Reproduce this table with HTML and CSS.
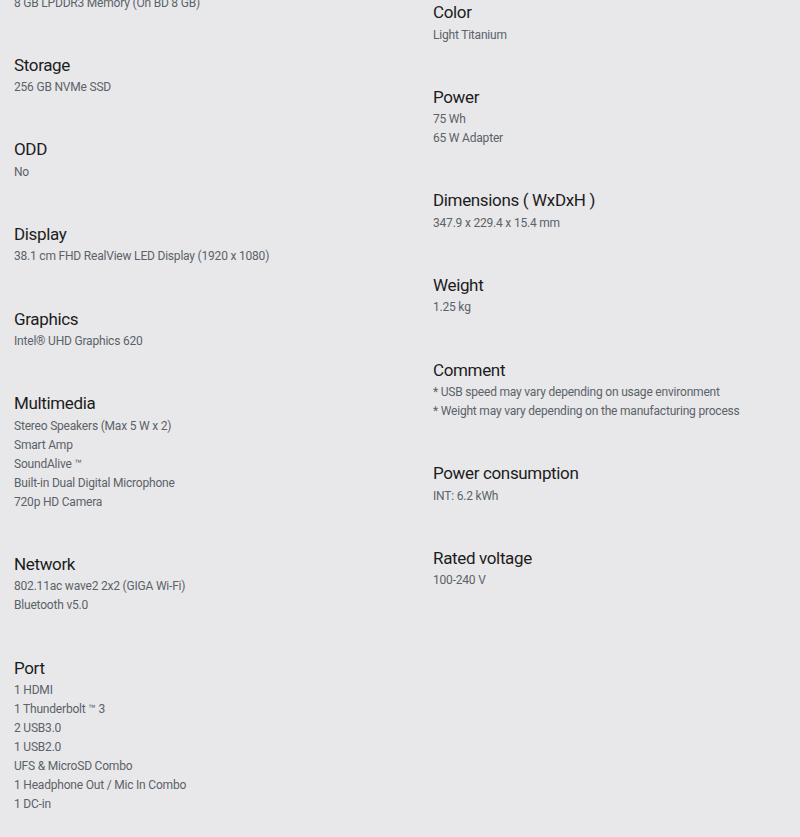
FILE: index.html
```html
<!DOCTYPE html>
<html lang="en">
<head>
<meta charset="utf-8">
<title>Specifications</title>
<link rel="stylesheet" href="styles.css">
</head>
<body>
<div class="specs">
  <div class="col col-left">
    <div class="item">
      <h3 class="title">Memory</h3>
      <p class="val">8 GB LPDDR3 Memory (On BD 8 GB)</p>
    </div>
    <div class="item">
      <h3 class="title">Storage</h3>
      <p class="val">256 GB NVMe SSD</p>
    </div>
    <div class="item">
      <h3 class="title">ODD</h3>
      <p class="val">No</p>
    </div>
    <div class="item">
      <h3 class="title">Display</h3>
      <p class="val">38.1 cm FHD RealView LED Display (1920 x 1080)</p>
    </div>
    <div class="item">
      <h3 class="title">Graphics</h3>
      <p class="val">Intel® UHD Graphics 620</p>
    </div>
    <div class="item">
      <h3 class="title">Multimedia</h3>
      <p class="val">Stereo Speakers (Max 5 W x 2)</p>
      <p class="val">Smart Amp</p>
      <p class="val">SoundAlive ™</p>
      <p class="val">Built-in Dual Digital Microphone</p>
      <p class="val">720p HD Camera</p>
    </div>
    <div class="item">
      <h3 class="title">Network</h3>
      <p class="val">802.11ac wave2 2x2 (GIGA Wi-Fi)</p>
      <p class="val">Bluetooth v5.0</p>
    </div>
    <div class="item">
      <h3 class="title">Port</h3>
      <p class="val">1 HDMI</p>
      <p class="val">1 Thunderbolt ™ 3</p>
      <p class="val">2 USB3.0</p>
      <p class="val">1 USB2.0</p>
      <p class="val">UFS &amp; MicroSD Combo</p>
      <p class="val">1 Headphone Out / Mic In Combo</p>
      <p class="val">1 DC-in</p>
    </div>
  </div>
  <div class="col col-right">
    <div class="item">
      <h3 class="title">Color</h3>
      <p class="val">Light Titanium</p>
    </div>
    <div class="item">
      <h3 class="title">Power</h3>
      <p class="val">75 Wh</p>
      <p class="val">65 W Adapter</p>
    </div>
    <div class="item">
      <h3 class="title">Dimensions ( WxDxH )</h3>
      <p class="val">347.9 x 229.4 x 15.4 mm</p>
    </div>
    <div class="item">
      <h3 class="title">Weight</h3>
      <p class="val">1.25 kg</p>
    </div>
    <div class="item">
      <h3 class="title">Comment</h3>
      <p class="val">* USB speed may vary depending on usage environment</p>
      <p class="val">* Weight may vary depending on the manufacturing process</p>
    </div>
    <div class="item">
      <h3 class="title">Power consumption</h3>
      <p class="val">INT: 6.2 kWh</p>
    </div>
    <div class="item">
      <h3 class="title">Rated voltage</h3>
      <p class="val">100-240 V</p>
    </div>
  </div>
</div>
</body>
</html>
```
FILE: styles.css
```css
html, body {
  margin: 0;
  padding: 0;
  background: #e8e8ea;
}
body {
  font-family: Roboto, "Noto Sans", sans-serif;
  overflow: hidden;
}
.specs {
  display: grid;
  grid-template-columns: 419px 1fr;
  padding-left: 14px;
  align-items: start;
}
.col-left {
  margin-top: -32px;
}
.item {
  margin-bottom: 40.17px;
}
.title {
  margin: 0 0 1.5px;
  font-size: 17px;
  line-height: 24px;
  font-weight: 400;
  letter-spacing: -0.35px;
  color: #1c1c1c;
}
.val {
  margin: 0;
  font-size: 12px;
  line-height: 19px;
  letter-spacing: -0.2px;
  color: #5b6269;
}
```
